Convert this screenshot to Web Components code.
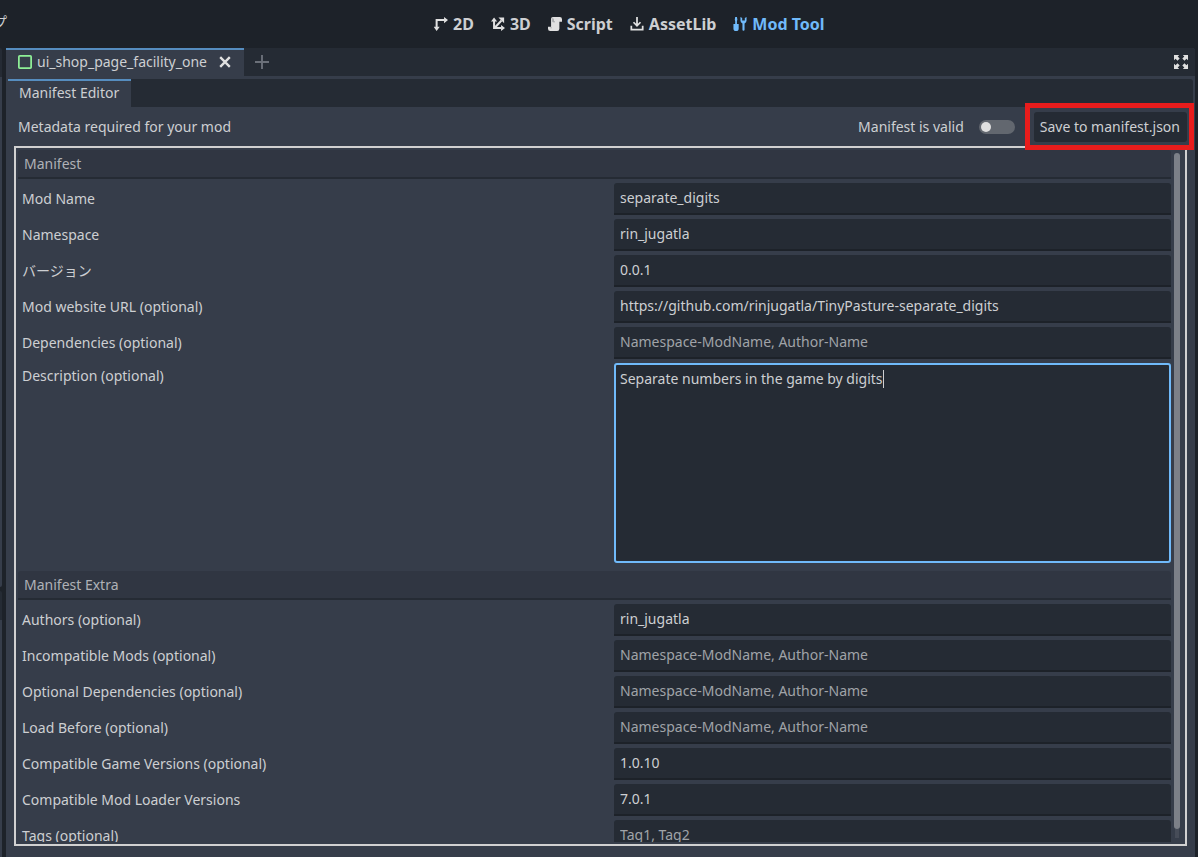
<!DOCTYPE html>
<html lang="en">
<head>
<meta charset="utf-8">
<title>Mod Tool</title>
<style>
:root {
  --base: #363d4a;
  --dark: #252b34;
  --darker: #1d2229;
  --section: #303642;
  --text: #cdcfd2;
  --muted: #a0a3a8;
  --icon: #e0e0e0;
  --accent: #70bafa;
  --tab-line: #568dbf;
}
html, body { height: 100%; }
body {
  margin: 0;
  overflow: hidden;
  background: var(--darker);
  color: var(--text);
  font: 14px/20px "Noto Sans", "Noto Sans CJK JP", sans-serif;
}
</style>
</head>
<body>
<editor-app></editor-app>
<script>
const define = (name, html, setup) => {
  const template = document.createElement('template');
  template.innerHTML = html;
  customElements.define(name, class extends HTMLElement {
    constructor() {
      super();
      this.attachShadow({ mode: 'open' }).append(template.content.cloneNode(true));
    }
    connectedCallback() {
      if (setup) setup(this, this.shadowRoot);
    }
  });
};

const icons = {
  '2d': '<path d="M3 12V3.500h9" fill="none" stroke="currentColor" stroke-width="2.300"/><path d="M11.500 0L16 3.500 11.500 7zM-.5 11h7L3 16z" fill="currentColor"/>',
  '3d': '<path d="M3.500 4v8.500h8M4 12.500L12 4" fill="none" stroke="currentColor" stroke-width="2.300"/><path d="M0 5l3.500-4.500L7 5zM11.500 9l4.500 3.500-4.500 3.500zM8.500 .5H15V7z" fill="currentColor"/>',
  script: '<path d="M5.500 0a2 2 0 0 0-2 2v9H0v2.500A2.500 2.500 0 0 0 2.500 16h8a2.500 2.500 0 0 0 2.500-2.500V5.500h3V2.500A2.500 2.500 0 0 0 13.500 0z" fill="currentColor"/><path d="M5.500 1v4.500H8M6 2.500V5M3.500 11.500V13" fill="none" stroke="#8b8e92" stroke-width=".8"/>',
  asset: '<path d="M8 0v9M4 6l4 4 4-4M1.500 10v4.500h13V10" fill="none" stroke="currentColor" stroke-width="2"/>',
  tools: '<path d="M2.500 0h2L5 3 4.500 4.500V8H6.500v5a3 3 0 0 1-6 0V8h2V4.500L2 3z" fill="currentColor"/><path d="M8.500 0v4a3.500 3.500 0 0 0 2.300 3.300V14.500a1.200 1.200 0 0 0 2.400 0V7.300A3.500 3.500 0 0 0 15.500 4V0L13.500 1v3h-3V1z" fill="currentColor"/>',
  control: '<rect x="1" y="1" width="14" height="14" rx="1" fill="none" stroke="#8eef97" stroke-width="2"/>',
  close: '<path d="M2.500 2.500l11 11M13.500 2.500l-11 11" stroke="currentColor" stroke-width="2.700"/>',
  plus: '<path d="M8 0v16M0 8h16" stroke="currentColor" stroke-width="2.200"/>',
  expand: '<path d="M0 0h6L4.200 1.800 6.500 4 4 6.500 1.800 4.200 0 6zM16 0v6l-1.800-1.800L12 6.500 9.500 4l2.300-2.200L10 0zM0 16v-6l1.800 1.800L4 9.500 6.500 12l-2.300 2.200L6 16zM16 16h-6l1.800-1.800L9.500 12 12 9.500l2.200 2.300L16 10z" fill="currentColor"/>'
};

define('ui-icon', `
<style>
  :host { display: block; flex: none; width: 14px; height: 14px; }
  svg { display: block; width: 100%; height: 100%; }
</style>
<svg viewBox="0 0 16 16" aria-hidden="true"></svg>`,
(el, root) => { root.querySelector('svg').innerHTML = icons[el.getAttribute('name')]; });

define('icon-button', `
<style>
  :host { display: block; flex: none; color: var(--icon); }
  button { display: block; margin: 0; padding: 0; border: 0; background: none; color: inherit; }
</style>
<button type="button"><slot></slot></button>`,
(el, root) => {
  root.querySelector('button').setAttribute('aria-label', el.getAttribute('label'));
});

define('mode-button', `
<style>
  :host { display: block; flex: none; }
  button {
    display: flex; align-items: center; gap: 5px;
    margin: 0; padding: 0; border: 0; background: none;
    color: var(--text); font: bold 16px/24px "Noto Sans", sans-serif;
  }
  .icon { color: var(--icon); }
  :host([active]) button, :host([active]) .icon { color: var(--accent); }
</style>
<button type="button"><span class="icon"><slot name="icon"></slot></span><slot></slot></button>`);

define('tool-bar', `
<style>
  :host { display: flex; flex: none; align-items: center; height: 48px; }
  .menu { flex: 0 0 434px; display: flex; overflow: hidden; }
  .menu button {
    margin: 0 0 6px -7px; padding: 0; border: 0; background: none;
    color: var(--text); font: 14px/20px "Noto Sans CJK JP", sans-serif;
  }
  nav { display: flex; gap: 17px; }
</style>
<div class="menu"><button type="button">プ</button></div>
<nav>
  <mode-button><ui-icon slot="icon" name="2d"></ui-icon>2D</mode-button>
  <mode-button><ui-icon slot="icon" name="3d"></ui-icon>3D</mode-button>
  <mode-button><ui-icon slot="icon" name="script"></ui-icon>Script</mode-button>
  <mode-button><ui-icon slot="icon" name="asset"></ui-icon>AssetLib</mode-button>
  <mode-button active><ui-icon slot="icon" name="tools"></ui-icon>Mod Tool</mode-button>
</nav>`);

define('tab-item', `
<style>
  :host {
    display: flex; align-items: center; box-sizing: border-box; height: 28px;
    padding: 0 12px 2px 11px; border-top: 2px solid var(--tab-line); background: var(--base);
  }
</style>
<slot></slot>`);

define('side-dock', `
<style>
  :host { display: flex; flex-direction: column; gap: 4px; flex: 0 0 2px; }
  div { background: var(--base); border-top: 29px solid var(--dark); border-radius: 0 3px 0 0; flex: 237 0 0; }
  .upper { flex: 510 0 0; border-bottom-right-radius: 3px; }
</style>
<div class="upper"></div><div></div>`);

define('section-title', `
<style>
  :host {
    display: block; box-sizing: border-box; height: 29px; padding: 4px 6px 3px;
    background: var(--section); border-bottom: 2px solid var(--dark);
    border-radius: 3px 3px 0 0; color: #afb1b6;
  }
  h2 { margin: 0; font: inherit; }
</style>
<h2><slot></slot></h2>`);

define('form-field', `
<style>
  :host { display: grid; grid-template-columns: minmax(0, 592fr) minmax(0, 557fr); column-gap: 4px; }
  label { padding: 6px 4px; }
  .control { position: relative; }
  input, textarea {
    display: block; box-sizing: border-box; width: 100%; height: 32px; margin: 0;
    padding: 0 6px 2px; border: 0; border-bottom: 2px solid var(--darker);
    border-radius: 3px 3px 0 0; outline: 0; background: var(--dark);
    color: var(--text); font: inherit;
  }
  input::placeholder { color: var(--muted); opacity: 1; }
  textarea { height: 200px; padding: 4px; border: 2px solid var(--accent); border-radius: 3px; resize: none; }
  :host([multiline]) label { padding-top: 3px; }
  .caret { position: absolute; left: 269px; top: 7px; width: 1px; height: 18px; background: var(--text); }
</style>
<label for="control"><slot></slot></label>
<div class="control"></div>`,
(el, root) => {
  const multi = el.hasAttribute('multiline');
  const field = document.createElement(multi ? 'textarea' : 'input');
  field.id = 'control';
  field.spellcheck = false;
  field.value = el.getAttribute('value') || '';
  if (!multi) field.placeholder = el.getAttribute('placeholder') || '';
  const box = root.querySelector('.control');
  box.replaceChildren(field);
  if (multi) {
    const caret = document.createElement('span');
    caret.className = 'caret';
    box.append(caret);
  }
});

define('manifest-header', `
<style>
  :host { display: flex; flex: none; align-items: center; height: 39px; padding: 0 8px 0 12px; }
  p { margin: 0; flex: 1; }
  label { display: flex; align-items: center; gap: 15px; margin-right: 19px; }
  input {
    appearance: none; display: flex; align-items: center; box-sizing: border-box;
    width: 36px; height: 14px; margin: 0; padding: 0 2px; border-radius: 7px; background: #62676f;
  }
  input::before { content: ""; width: 10px; height: 10px; border-radius: 50%; background: var(--icon); }
  .save { position: relative; }
  button {
    display: block; margin: 0; padding: 5px 7px 5px 6px; border: 0; border-radius: 3px;
    background: var(--dark); color: inherit; font: inherit;
  }
  .mark { position: absolute; inset: -9px -7px -8px -9px; border: 5px solid #e81c1c; pointer-events: none; z-index: 1; }
</style>
<p>Metadata required for your mod</p>
<label>Manifest is valid<input type="checkbox" role="switch" disabled></label>
<div class="save"><button type="button">Save to manifest.json</button><span class="mark"></span></div>`);

define('manifest-form', `
<style>
  :host {
    display: flex; flex: 1; min-height: 0; box-sizing: border-box; gap: 3px;
    margin: 0 8px 11px; padding: 2px 5px 2px 2px; border: 2px solid #d1d1d1;
  }
  form { flex: 1; min-width: 0; overflow: hidden; display: flex; flex-direction: column; gap: 4px; }
  form > * { flex: none; }
  .second { margin-top: 4px; }
  .scroll { display: flex; flex-direction: column; width: 6px; padding: 3px 0 4px; }
  .thumb { flex: 1; border-radius: 3px; background: #7c8088; }
  .track { height: 9px; margin: 0 1px; background: #464c58; }
</style>
<form>
  <section-title>Manifest</section-title>
  <form-field value="separate_digits">Mod Name</form-field>
  <form-field value="rin_jugatla">Namespace</form-field>
  <form-field value="0.0.1">バージョン</form-field>
  <form-field value="https://github.com/rinjugatla/TinyPasture-separate_digits">Mod website URL (optional)</form-field>
  <form-field placeholder="Namespace-ModName, Author-Name">Dependencies (optional)</form-field>
  <form-field multiline value="Separate numbers in the game by digits">Description (optional)</form-field>
  <section-title class="second">Manifest Extra</section-title>
  <form-field value="rin_jugatla">Authors (optional)</form-field>
  <form-field placeholder="Namespace-ModName, Author-Name">Incompatible Mods (optional)</form-field>
  <form-field placeholder="Namespace-ModName, Author-Name">Optional Dependencies (optional)</form-field>
  <form-field placeholder="Namespace-ModName, Author-Name">Load Before (optional)</form-field>
  <form-field value="1.0.10">Compatible Game Versions (optional)</form-field>
  <form-field value="7.0.1">Compatible Mod Loader Versions</form-field>
  <form-field placeholder="Tag1, Tag2">Tags (optional)</form-field>
</form>
<div class="scroll"><div class="thumb"></div><div class="track"></div></div>`);

define('editor-app', `
<style>
  :host { display: flex; flex-direction: column; height: 100vh; }
  .body { display: flex; flex: 1; min-height: 0; gap: 4px; padding-right: 3px; }
  main { display: flex; flex-direction: column; flex: 1; min-width: 0; background: var(--base); border-radius: 0 3px 0 0; overflow: hidden; }
  .tabs { display: flex; flex: none; align-items: center; height: 28px; background: var(--dark); }
  .scenes { margin-bottom: 3px; padding-right: 7px; }
  .scenes tab-item { padding-left: 12px; }
  .add { margin-left: 11px; color: #6b7079; }
  .grow { flex: 1; }
  .name { margin: 0 11px 0 5px; }
  .plugins { margin: 0 2px; border-radius: 0 3px 0 0; }
</style>
<tool-bar></tool-bar>
<div class="body">
  <side-dock></side-dock>
  <main>
    <div class="tabs scenes">
      <tab-item><ui-icon name="control"></ui-icon><span class="name">ui_shop_page_facility_one</span><icon-button label="Close tab"><ui-icon name="close"></ui-icon></icon-button></tab-item>
      <icon-button class="add" label="New tab"><ui-icon name="plus"></ui-icon></icon-button>
      <span class="grow"></span>
      <icon-button label="Distraction free mode"><ui-icon name="expand"></ui-icon></icon-button>
    </div>
    <div class="tabs plugins"><tab-item>Manifest Editor</tab-item></div>
    <manifest-header></manifest-header>
    <manifest-form></manifest-form>
  </main>
</div>`);
</script>
</body>
</html>
